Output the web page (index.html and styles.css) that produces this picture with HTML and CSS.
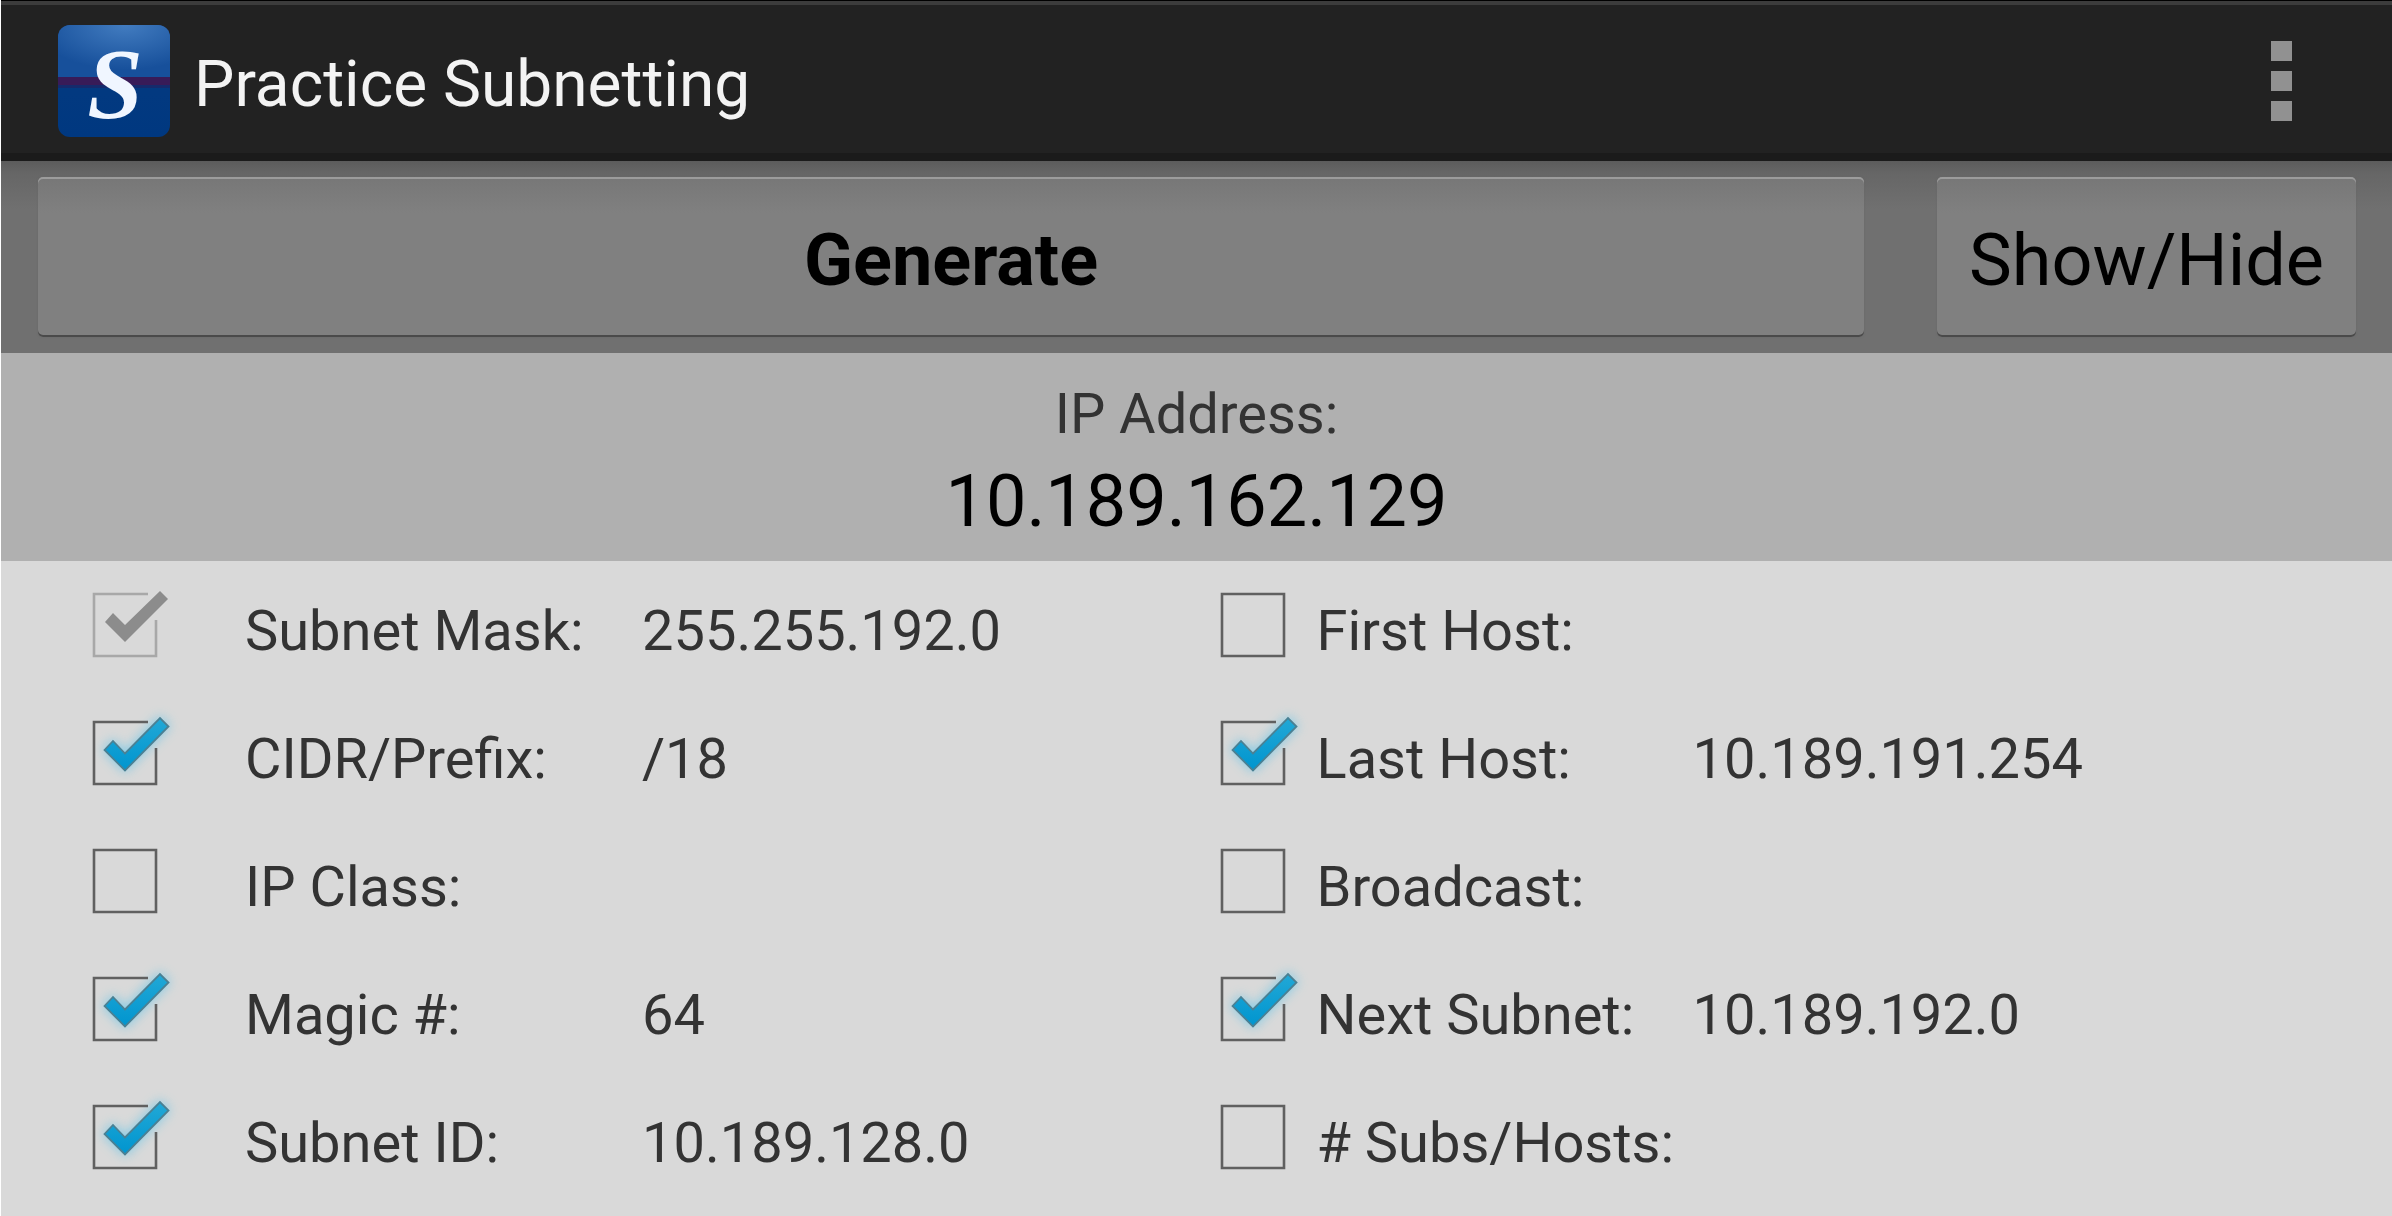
FILE: index.html
```html
<!DOCTYPE html>
<html lang="en">
<head>
    <meta charset="UTF-8">
    <meta name="viewport" content="width=device-width, initial-scale=1.0">
    <title>Practice Subnetting</title>

    <link rel="stylesheet" href="styles.css">
</head>

<body>

    <header class="topbar">
        <svg class="topbar__logo" viewBox="0 0 112 112" aria-hidden="true">
            <defs>
                <radialGradient id="shine" cx="0.6" cy="0" r="0.8">
                    <stop offset="0" stop-color="#427cc0"/>
                    <stop offset="1" stop-color="#17509b"/>
                </radialGradient>
                <linearGradient id="base" x1="0" y1="0" x2="0" y2="1">
                    <stop offset="0" stop-color="#1c4488"/>
                    <stop offset="0.2" stop-color="#043a80"/>
                    <stop offset="1" stop-color="#003880"/>
                </linearGradient>
            </defs>
            <rect width="112" height="112" rx="12" fill="url(#base)"/>
            <path d="M0 56V12A12 12 0 0 1 12 0H100A12 12 0 0 1 112 12V56Z" fill="url(#shine)"/>
            <rect y="52" width="112" height="8" fill="#381b58"/>
            <rect y="60" width="112" height="3" fill="#152a6c"/>
            <text class="topbar__letter" x="57" y="92" text-anchor="middle">S</text>
        </svg>
        <h1 class="topbar__title">Practice Subnetting</h1>
        <button type="button" class="topbar__menu" aria-label="More options">
            <svg viewBox="0 0 21 80" aria-hidden="true">
                <path d="M0 0h21v20H0zM0 30h21v20H0zM0 60h21v20H0z"/>
            </svg>
        </button>
    </header>

    <div class="actions">
        <button type="button" class="actions__button actions__button--main">Generate</button>
        <button type="button" class="actions__button">Show/Hide</button>
    </div>

    <section class="address">
        <h2 class="address__label">IP Address:</h2>
        <p class="address__value">10.189.162.129</p>
    </section>

    <main class="answers">
        <div class="answers__column answers__column--left">
            <div class="answer">
                <input type="checkbox" id="mask" checked disabled>
                <label for="mask">Subnet Mask:</label>
                <output for="mask">255.255.192.0</output>
            </div>
            <div class="answer">
                <input type="checkbox" id="cidr" checked>
                <label for="cidr">CIDR/Prefix:</label>
                <output for="cidr">/18</output>
            </div>
            <div class="answer">
                <input type="checkbox" id="class">
                <label for="class">IP Class:</label>
                <output for="class"></output>
            </div>
            <div class="answer">
                <input type="checkbox" id="magic" checked>
                <label for="magic">Magic #:</label>
                <output for="magic">64</output>
            </div>
            <div class="answer">
                <input type="checkbox" id="subnet" checked>
                <label for="subnet">Subnet ID:</label>
                <output for="subnet">10.189.128.0</output>
            </div>
        </div>

        <div class="answers__column">
            <div class="answer">
                <input type="checkbox" id="first">
                <label for="first">First Host:</label>
                <output for="first"></output>
            </div>
            <div class="answer">
                <input type="checkbox" id="last" checked>
                <label for="last">Last Host:</label>
                <output for="last">10.189.191.254</output>
            </div>
            <div class="answer">
                <input type="checkbox" id="broadcast">
                <label for="broadcast">Broadcast:</label>
                <output for="broadcast"></output>
            </div>
            <div class="answer">
                <input type="checkbox" id="next" checked>
                <label for="next">Next Subnet:</label>
                <output for="next">10.189.192.0</output>
            </div>
            <div class="answer">
                <input type="checkbox" id="hosts">
                <label for="hosts"># Subs/Hosts:</label>
                <output for="hosts"></output>
            </div>
        </div>
    </main>

</body>
</html>
```
FILE: styles.css
```css
* {
    box-sizing: border-box;
}

body {
    margin: 0;
    min-height: 100vh;
    border-left: 1px solid #fff;
    background-color: #d9d9d9;
    font-family: Roboto, sans-serif;
    font-size: 56px;
    color: #333;
}

h1, h2, p {
    margin: 0;
    font-weight: normal;
}

button {
    border: none;
    font-family: inherit;
    cursor: pointer;
}

/* title bar */

.topbar {
    display: flex;
    align-items: center;
    height: 161px;
    padding: 0 76px 0 57px;
    border-top: 1px solid #000;
    background: linear-gradient(#3c3c3c 4px, #222 4px, #222 152px, #1b1b1b 152px);
}

.topbar__logo {
    width: 112px;
    height: 112px;
    overflow: visible;
}

.topbar__letter {
    font-family: "Liberation Serif", serif;
    font-size: 100px;
    font-weight: bold;
    font-style: italic;
    fill: #f0f6ff;
}

.topbar__title {
    flex: 1;
    padding: 6px 0 0 24px;
    font-size: 64px;
    color: #f3f3f3;
}

.topbar__menu {
    display: flex;
    padding: 24px;
    background: none;
}

.topbar__menu svg {
    width: 21px;
    height: 80px;
    fill: #919191;
}

/* buttons */

.actions {
    display: flex;
    gap: 73px;
    padding: 16px 36px 16px 37px;
    background: linear-gradient(#5c5c5c, #666 12px, #707070 48px, #707070);
}

.actions__button {
    height: 160px;
    padding: 6px 32px 0;
    border-radius: 5px;
    background: linear-gradient(#777, #808080 36px);
    box-shadow: inset 0 2px #9c9c9c, inset 0 -2px #4a4a4a, 0 0 2px #666;
    font-size: 72px;
    color: #000;
}

.actions__button--main {
    flex: 1;
    font-weight: bold;
}

/* address */

.address {
    display: flex;
    flex-direction: column;
    gap: 13px;
    padding: 28px 0 17px;
    background-color: #b0b0b0;
    text-align: center;
}

.address__label {
    font-size: 56px;
    line-height: 66px;
}

.address__value {
    font-size: 72px;
    line-height: 84px;
    color: #000;
}

/* answers */

.answers {
    display: grid;
    grid-template-columns: 47fr 48fr;
    padding: 0 52px 0 60px;
}

.answer {
    display: grid;
    grid-template-columns: 128px 376px 1fr;
    line-height: 128px;
    height: 128px;
}

.answers__column--left .answer {
    grid-template-columns: 184px 397px 1fr;
}

.answer label,
.answer output {
    padding-top: 6px;
    white-space: nowrap;
}

.answer input {
    appearance: none;
    width: 128px;
    height: 128px;
    margin: 0;
    background-image: url("data:image/svg+xml,%3Csvg xmlns='http://www.w3.org/2000/svg' viewBox='0 0 128 128'%3E%3Cpath d='M33 33H95V95H33Z' fill='none' stroke='%23606060' stroke-width='2.6'/%3E%3C/svg%3E");
}

.answer input:checked {
    background-image: url("data:image/svg+xml,%3Csvg xmlns='http://www.w3.org/2000/svg' viewBox='0 0 128 128'%3E%3Cdefs%3E%3Cfilter id='g' x='-50%25' y='-50%25' width='200%25' height='200%25'%3E%3CfeGaussianBlur stdDeviation='6'/%3E%3C/filter%3E%3ClinearGradient id='c' x1='0' y1='0' x2='0' y2='1'%3E%3Cstop offset='0' stop-color='%2322a8d6'/%3E%3Cstop offset='1' stop-color='%230095cf'/%3E%3C/linearGradient%3E%3C/defs%3E%3Cpath d='M43 61L52 51L64 64L99 28L108 37L64 82Z' fill='%2374c8e6' stroke='%2374c8e6' stroke-width='2' opacity='.85' filter='url(%23g)'/%3E%3Cpath d='M87 33H33V95H95V59' fill='none' stroke='%23606060' stroke-width='2.6'/%3E%3Cpath d='M43.5 61L52 52L64 64.5L99 29L107.5 37.5L64 81.5Z' fill='url(%23c)' stroke='%234b8093' stroke-width='1.8'/%3E%3C/svg%3E");
}

.answer input:disabled {
    background-image: url("data:image/svg+xml,%3Csvg xmlns='http://www.w3.org/2000/svg' viewBox='0 0 128 128'%3E%3Cpath d='M87 33H33V95H95V59' fill='none' stroke='%23a8a8a8' stroke-width='2.6'/%3E%3Cpath d='M44 61L52 52L64 64L99 30L107 38L64 81Z' fill='%238c8c8c'/%3E%3C/svg%3E");
}
```
